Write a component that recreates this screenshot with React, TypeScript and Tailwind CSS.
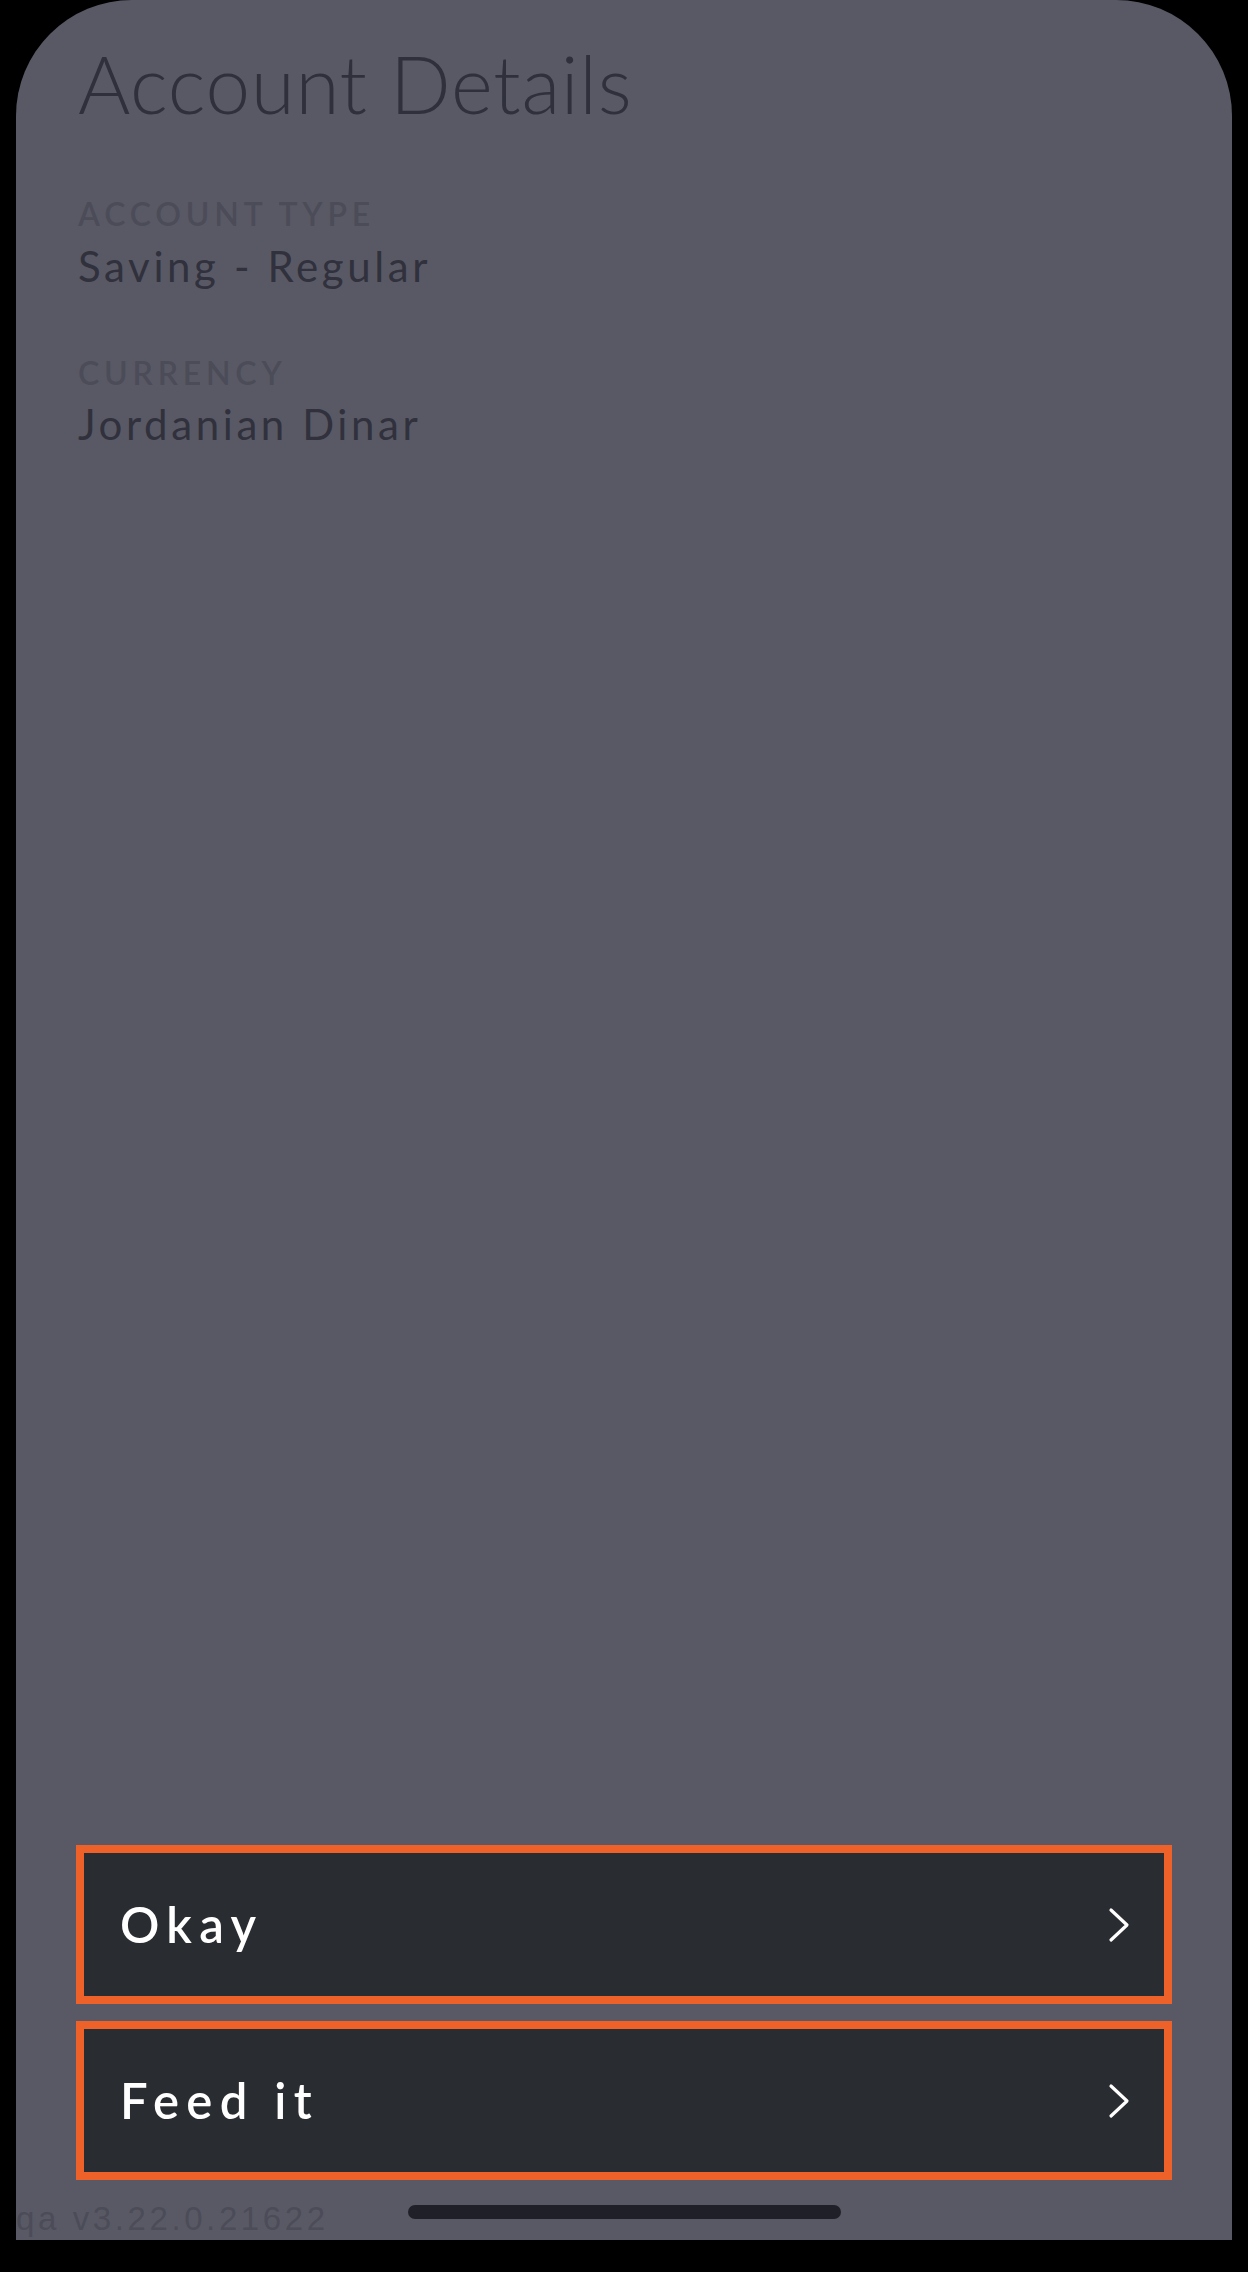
import React from "react";

function Chevron() {
  return (
    <svg width="22" height="36" viewBox="0 0 22 36" fill="none">
      <polyline points="3,3 19,18 3,33" stroke="#ffffff" strokeWidth="3.2" strokeLinecap="round" strokeLinejoin="round" />
    </svg>
  );
}

function ActionButton({ label }: { label: string }) {
  return (
    <button className="flex h-[159px] w-full items-center justify-between border-[8px] border-[#ee6128] bg-[#292c30] pl-[36px] pr-[34px]">
      <span className="text-[49px] font-semibold leading-none tracking-[0.15em] text-white">{label}</span>
      <Chevron />
    </button>
  );
}

export default function App() {
  return (
    <div className="h-[2272px] w-[1248px] bg-black" style={{ fontFamily: "Lato, 'Noto Sans', sans-serif" }}>
      <div className="mx-4 flex h-[2240px] flex-col rounded-t-[116px] bg-[#595965] px-[60px] pt-[43px]">
        <h1 className="ml-[2px] text-[80px] font-light leading-none tracking-[0.7px] text-[#2f303c]">Account Details</h1>

        <div className="ml-[2px] mt-[75px] text-[32px] font-semibold leading-none tracking-[0.15em] text-[#4b4c58]">ACCOUNT TYPE</div>
        <div className="ml-[2px] mt-[15px] text-[42px] leading-none tracking-[3.6px] text-[#30313c]">Saving - Regular</div>

        <div className="ml-[2px] mt-[70px] text-[32px] font-semibold leading-none tracking-[0.15em] text-[#4b4c58]">CURRENCY</div>
        <div className="ml-[2px] mt-[14px] text-[42px] leading-none tracking-[3.6px] text-[#30313c]">Jordanian Dinar</div>

        <div className="flex-1" />

        <div className="flex flex-col gap-[17px]">
          <ActionButton label="Okay" />
          <ActionButton label="Feed it" />
        </div>

        <div className="relative -mx-[60px] h-[60px]">
          <span className="absolute left-0 top-[22px] text-[33px] leading-none tracking-[3.6px] text-[#4b4c58]" style={{ fontFamily: "'Liberation Sans', sans-serif" }}>qa v3.22.0.21622</span>
          <div className="mx-auto mt-[25px] h-[14px] w-[433px] rounded-full bg-[#202128]" />
        </div>
      </div>
    </div>
  );
}
